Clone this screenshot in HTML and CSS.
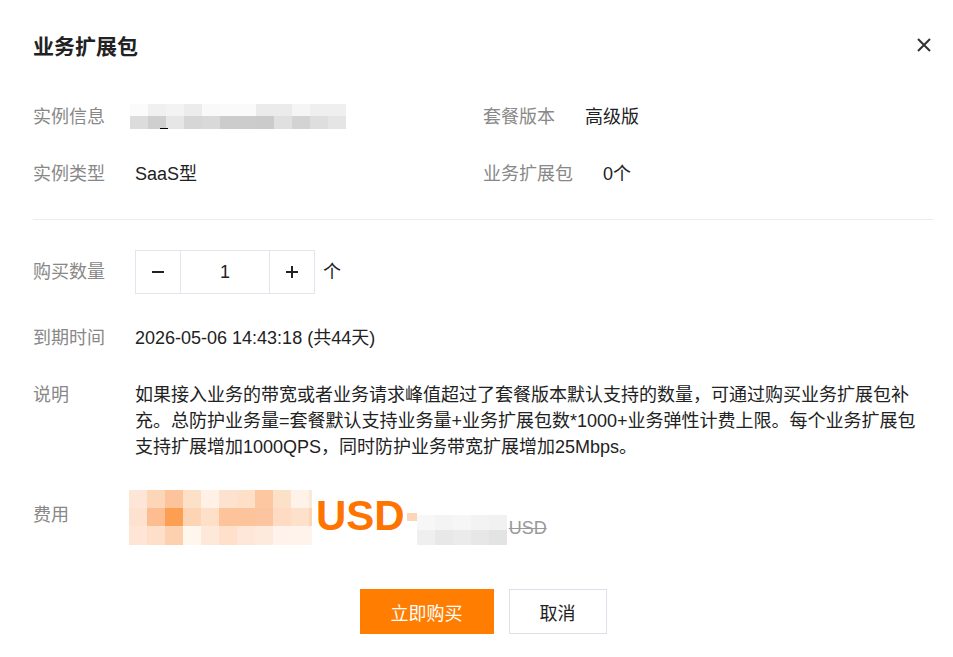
FILE: index.html
```html
<!DOCTYPE html>
<html lang="zh-CN">
<head>
    <meta charset="UTF-8">
    <meta name="viewport" content="width=device-width, initial-scale=1.0">
    <title>业务扩展包</title>
    <link rel="stylesheet" href="styles.css">
</head>
<body>

    <div class="dialog">
        <!-- header -->
        <div class="dialog-header">
            <h1 class="dialog-title">业务扩展包</h1>
            <button class="close-btn" aria-label="关闭">
                <svg width="14" height="14" viewBox="0 0 14 14">
                    <path d="M1 1L13 13M13 1L1 13" stroke="#333" stroke-width="2" fill="none"/>
                </svg>
            </button>
        </div>

        <!-- instance info -->
        <div class="info-grid">
            <div class="info-item">
                <span class="label">实例信息</span>
                <span class="value masked">
                    <span class="mosaic" id="instanceMosaic"></span>
                    <span class="underscore"></span>
                </span>
            </div>
            <div class="info-item">
                <span class="label">套餐版本</span>
                <span class="value">高级版</span>
            </div>
            <div class="info-item">
                <span class="label">实例类型</span>
                <span class="value">SaaS型</span>
            </div>
            <div class="info-item">
                <span class="label">业务扩展包</span>
                <span class="value">0个</span>
            </div>
        </div>

        <div class="divider"></div>

        <!-- form -->
        <div class="form-row row-qty">
            <span class="label">购买数量</span>
            <div class="stepper">
                <button class="step-btn minus">
                    <svg width="14" height="14" viewBox="0 0 14 14"><path d="M1 7H13" stroke="#222" stroke-width="2"/></svg>
                </button>
                <input class="step-input" type="text" value="1">
                <button class="step-btn plus">
                    <svg width="14" height="14" viewBox="0 0 14 14"><path d="M1 7H13M7 1V13" stroke="#222" stroke-width="2"/></svg>
                </button>
            </div>
            <span class="unit">个</span>
        </div>

        <div class="form-row">
            <span class="label">到期时间</span>
            <span class="value">2026-05-06 14:43:18 (共44天)</span>
        </div>

        <div class="form-row">
            <span class="label">说明</span>
            <p class="desc">如果接入业务的带宽或者业务请求峰值超过了套餐版本默认支持的数量，可通过购买业务扩展包补充。总防护业务量=套餐默认支持业务量+业务扩展包数*1000+业务弹性计费上限。每个业务扩展包支持扩展增加1000QPS，同时防护业务带宽扩展增加25Mbps。</p>
        </div>

        <div class="form-row row-price">
            <span class="label">费用</span>
            <div class="price">
                <span class="mosaic price-mosaic" id="priceMosaic"></span>
                <span class="price-unit">USD</span>
                <span class="price-dot"></span>
                <span class="mosaic old-mosaic" id="oldMosaic"></span>
                <span class="old-unit">USD</span>
            </div>
        </div>

        <div class="dialog-footer">
            <button class="btn btn-primary">立即购买</button>
            <button class="btn btn-default">取消</button>
        </div>
    </div>

    <script>
        // blurred values, drawn as mosaic cells
        const mosaics = {
            instanceMosaic: [
                ['#fbfbfb', '#f0f0f0', '#f3f3f3', '#ececec', '#f9f9f9', '#fafafa', '#fafafa', '#ebebeb', '#ebebeb', '#f5f5f5', '#efefef', '#efefef'],
                ['#dcdcdc', '#cfcfcf', '#e6e6e6', '#d6d6d6', '#d9d9d9', '#cccccc', '#cccccc', '#cbcbcb', '#e0e0e0', '#d3d3d3', '#dedede', '#e5e5e5']
            ],
            priceMosaic: [
                ['#fde6d8', '#fdd6b8', '#fdc39b', '#fde0c8', '#fff1e6', '#fde3cf', '#fee0c9', '#fdc79f', '#fde0c8', '#fff2e8', '#fde7d6'],
                ['#fde3cf', '#fdbd90', '#fd9f52', '#fdd4b4', '#fee0c9', '#fdc49c', '#fdc49c', '#fdc59f', '#fedbc2', '#fee1cb', '#fdd5b6'],
                ['#fee5d5', '#fedfc9', '#fdd0b0', '#fff6ee', '#fee8da', '#fee0cb', '#fee7d8', '#feeadc', '#fff3eb', '#fff3eb', '#fef4ec']
            ],
            oldMosaic: [
                ['#f7f7f7', '#f4f4f4', '#f6f6f6', '#f3f3f3', '#f1f1f1'],
                ['#efefef', '#e8e8e8', '#ebebeb', '#e7e7e7', '#e3e3e3']
            ]
        };

        for (const id in mosaics) {
            const box = document.getElementById(id);
            mosaics[id].forEach(row => {
                const line = document.createElement('span');
                line.classList.add('mosaic-row');
                row.forEach(color => {
                    const cell = document.createElement('span');
                    cell.classList.add('mosaic-cell');
                    cell.style.backgroundColor = color;
                    line.appendChild(cell);
                });
                box.appendChild(line);
            });
        }
    </script>
</body>
</html>
```

FILE: styles.css
```css
/* dialog layout */
body {
    margin: 0;
    background-color: #fff;
    font-family: "Liberation Sans", "Noto Sans CJK SC", sans-serif;
    font-size: 18px;
    color: #222;
}

.dialog {
    width: 900px;
    padding: 0 20px 0 33px;
}

.dialog-header {
    height: 88px;
    display: flex;
    align-items: center;
    justify-content: space-between;
    padding-bottom: 4px;
    box-sizing: border-box;
}

.dialog-title {
    margin: 0;
    font-size: 21px;
    font-weight: bold;
    line-height: 28px;
    color: #222;
    position: relative;
    top: 5px;
}

.close-btn {
    border: none;
    background: none;
    padding: 0;
    margin-right: 2px;
    width: 14px;
    height: 14px;
    display: flex;
    cursor: pointer;
    position: relative;
    top: 3px;
}

.label {
    min-width: 72px;
    margin-right: 30px;
    color: #888;
    line-height: 26px;
    flex-shrink: 0;
}

.value {
    color: #222;
    line-height: 26px;
}

/* info block */
.info-grid {
    display: grid;
    grid-template-columns: 450px 450px;
    grid-auto-rows: 57px;
}

.info-item {
    display: flex;
    align-items: center;
}

.masked {
    position: relative;
    display: flex;
    align-items: center;
    margin-left: -5px;
}

.underscore {
    position: absolute;
    left: 30px;
    top: 24px;
    width: 8px;
    height: 1px;
    background-color: #000;
}

.divider {
    height: 1px;
    background-color: #ececec;
    margin-top: 17px;
}

/* mosaic */
.mosaic {
    display: flex;
    flex-direction: column;
}

.mosaic-row {
    display: flex;
}

.mosaic-cell {
    width: 18px;
    height: 12px;
}

#instanceMosaic .mosaic-row:last-child .mosaic-cell {
    height: 13px;
}

/* form */
.form-row {
    display: flex;
    align-items: flex-start;
    margin-top: 31px;
}

.row-qty {
    align-items: center;
    margin-top: 30px;
}

.stepper {
    display: flex;
    width: 180px;
    height: 44px;
    border: 1px solid #e3e6ee;
    box-sizing: border-box;
}

.step-btn {
    width: 44px;
    border: none;
    background: #fff;
    padding: 0;
    display: flex;
    align-items: center;
    justify-content: center;
    cursor: pointer;
}

.step-input {
    width: 90px;
    box-sizing: border-box;
    border: none;
    border-left: 1px solid #e3e6ee;
    border-right: 1px solid #e3e6ee;
    padding: 0;
    text-align: center;
    font-family: inherit;
    font-size: 18px;
    color: #222;
    outline: none;
}

.unit {
    margin-left: 8px;
    line-height: 26px;
}

.desc {
    margin: 0;
    width: 790px;
    line-height: 26px;
    color: #222;
}

/* price */
.row-price {
    align-items: center;
    margin-top: 30px;
}

.row-price .label {
    position: relative;
    top: -3px;
}

.price {
    display: flex;
    align-items: flex-end;
    margin-left: -6px;
}

.price-mosaic {
    width: 183px;
    overflow: hidden;
}

.price-mosaic .mosaic-cell {
    height: 18px;
    flex-shrink: 0;
}

.price-mosaic .mosaic-row:last-child .mosaic-cell {
    height: 19px;
}

.price-unit {
    margin-left: 4px;
    font-size: 42px;
    font-weight: bold;
    line-height: 48px;
    color: #ff7300;
    align-self: center;
    position: relative;
    top: -2px;
}

.price-dot {
    width: 10px;
    height: 8px;
    background-color: #fdd6b8;
    margin-left: 2px;
    align-self: flex-start;
    margin-top: 23px;
}

.old-mosaic .mosaic-cell {
    height: 15px;
}

.old-unit {
    margin-left: 2px;
    margin-bottom: 6px;
    font-size: 18px;
    line-height: 22px;
    color: #999;
    text-decoration: line-through;
}

/* footer buttons */
.dialog-footer {
    display: flex;
    justify-content: center;
    gap: 15px;
    margin-top: 44px;
}

.btn {
    height: 45px;
    font-family: inherit;
    font-size: 18px;
    cursor: pointer;
}

.btn-primary {
    width: 134px;
    border: none;
    background-color: #ff7d00;
    color: #fff;
}

.btn-primary:hover {
    background-color: #ff8f24;
}

.btn-default {
    width: 98px;
    border: 1px solid #dde0e8;
    background-color: #fff;
    color: #222;
}
```
